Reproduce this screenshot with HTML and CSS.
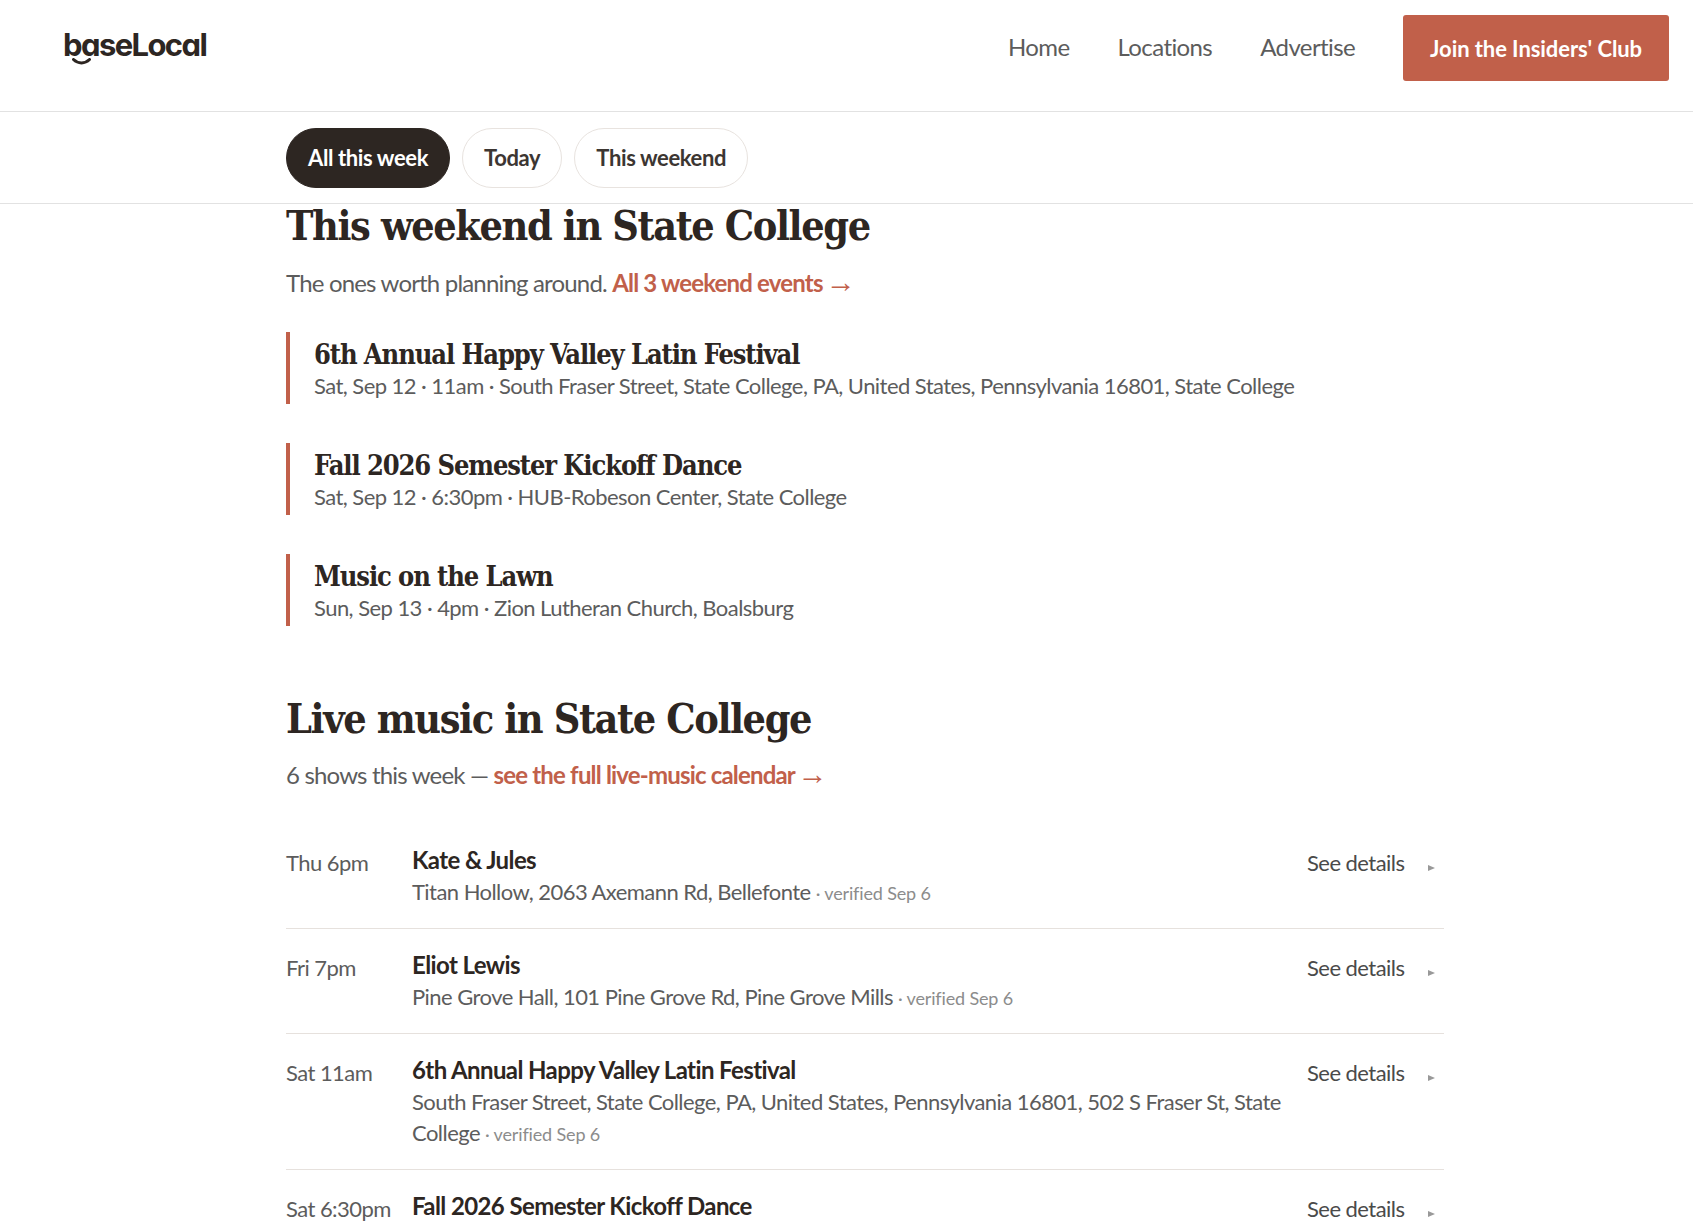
FILE: index.html
```html
<!DOCTYPE html>
<html>
<head>
	<title>baseLocal</title>
	<meta charset="utf-8">
	<link rel="stylesheet" href="styles.css">
</head>
<body>
<header class="site_header">
	<a class="logo" href="#">
		<span class="logo_text">baseLocal</span>
		<svg class="logo_smile" width="19" height="7" viewBox="0 0 19 7"><path d="M1.5 1.5 C6 6 13 6 17.5 1.5" fill="none" stroke="#2d2622" stroke-width="3" stroke-linecap="round"/></svg>
	</a>
	<nav class="site_nav">
		<a class="nav_link" href="#">Home</a>
		<a class="nav_link" href="#">Locations</a>
		<a class="nav_link" href="#">Advertise</a>
		<a class="join_btn" href="#">Join the Insiders' Club</a>
	</nav>
</header>

<div class="filter_bar">
	<a class="pill active" href="#">All this week</a>
	<a class="pill" href="#">Today</a>
	<a class="pill" href="#">This weekend</a>
</div>

<main class="content">
	<h2 class="first">This weekend in State College</h2>
	<p class="lead">The ones worth planning around. <a href="#">All 3 weekend events <span class="arrow">→</span></a></p>

	<div class="pick">
		<h3>6th Annual Happy Valley Latin Festival</h3>
		<p>Sat, Sep 12 · 11am · South Fraser Street, State College, PA, United States, Pennsylvania 16801, State College</p>
	</div>
	<div class="pick">
		<h3>Fall 2026 Semester Kickoff Dance</h3>
		<p>Sat, Sep 12 · 6:30pm · HUB-Robeson Center, State College</p>
	</div>
	<div class="pick">
		<h3>Music on the Lawn</h3>
		<p>Sun, Sep 13 · 4pm · Zion Lutheran Church, Boalsburg</p>
	</div>

	<h2 class="second">Live music in State College</h2>
	<p class="lead">6 shows this week — <a href="#">see the full live-music calendar <span class="arrow">→</span></a></p>

	<ul class="shows">
		<li class="show">
			<div class="when">Thu 6pm</div>
			<div class="what">
				<div class="name">Kate &amp; Jules</div>
				<div class="where">Titan Hollow, 2063 Axemann Rd, Bellefonte <small>· verified Sep 6</small></div>
			</div>
			<a class="details" href="#">See details<i></i></a>
		</li>
		<li class="show">
			<div class="when">Fri 7pm</div>
			<div class="what">
				<div class="name">Eliot Lewis</div>
				<div class="where">Pine Grove Hall, 101 Pine Grove Rd, Pine Grove Mills <small>· verified Sep 6</small></div>
			</div>
			<a class="details" href="#">See details<i></i></a>
		</li>
		<li class="show">
			<div class="when">Sat 11am</div>
			<div class="what">
				<div class="name">6th Annual Happy Valley Latin Festival</div>
				<div class="where">South Fraser Street, State College, PA, United States, Pennsylvania 16801, 502 S Fraser St, State College <small>· verified Sep 6</small></div>
			</div>
			<a class="details" href="#">See details<i></i></a>
		</li>
		<li class="show">
			<div class="when">Sat 6:30pm</div>
			<div class="what">
				<div class="name">Fall 2026 Semester Kickoff Dance</div>
				<div class="where">HUB-Robeson Center, State College <small>· verified Sep 6</small></div>
			</div>
			<a class="details" href="#">See details<i></i></a>
		</li>
	</ul>
</main>
</body>
</html>
```

FILE: styles.css
```css
*{
	margin: 0px;
	padding: 0px;
	box-sizing: border-box;
}
html, body{
	height: 100%;
	overflow: hidden;
}
body{
	font-family: Lato, "Liberation Sans", sans-serif;
	color: #2d2622;
	background-color: #fff;
}
a{
	text-decoration: none;
	color: inherit;
}
ul{
	list-style: none;
}

.site_header{
	display: flex;
	justify-content: space-between;
	height: 112px;
	padding: 15px 24px 0px 63px;
	border-bottom: 1px solid #e2e2e2;
}
.logo{
	position: relative;
	display: block;
	height: 48px;
	margin-top: 6px;
}
.logo_text{
	display: block;
	font-family: Inter, sans-serif;
	font-feature-settings: "cv11";
	font-size: 31px;
	font-weight: 700;
	line-height: 48px;
	letter-spacing: -1.6px;
}
.logo_smile{
	position: absolute;
	left: 9px;
	top: 37px;
}
.site_nav{
	display: flex;
	align-items: center;
	gap: 48px;
	height: 66px;
	font-size: 24px;
	color: #5c5c5c;
}
.nav_link{
	margin-bottom: 3px;
	letter-spacing: -0.6px;
}
.join_btn{
	display: flex;
	align-items: center;
	height: 66px;
	padding: 0px 27px;
	font-size: 22px;
	font-weight: 700;
	letter-spacing: -0.08px;
	color: #fff;
	background-color: #c1604a;
	border-radius: 3px;
}

.filter_bar{
	display: flex;
	gap: 12px;
	height: 92px;
	padding: 16px 0px 0px 286px;
	border-bottom: 1px solid #e2e2e2;
}
.pill{
	display: flex;
	align-items: center;
	height: 60px;
	padding: 0px 21px 2px;
	font-size: 22px;
	font-weight: 700;
	letter-spacing: -0.38px;
	color: #3c3632;
	border: 1px solid #e8e3df;
	border-radius: 30px;
}
.pill.active{
	color: #fff;
	background-color: #2d2622;
	border-color: #2d2622;
}

.content{
	width: 1158px;
	margin-left: 286px;
}
h2{
	font-family: "DejaVu Serif Condensed", "DejaVu Serif", serif;
	font-size: 41px;
	font-weight: 700;
	line-height: 44px;
	letter-spacing: -1.4px;
}
h2.second{
	margin-top: 71px;
}
.lead{
	margin-top: 19px;
	font-size: 24px;
	line-height: 32px;
	letter-spacing: -0.82px;
	color: #5c5c5c;
}
.second + .lead{
	margin-top: 18px;
}
.lead a{
	font-weight: 700;
	color: #c1604a;
}
.arrow{
	margin-left: -2px;
	font-family: "Liberation Sans", sans-serif;
	font-size: 30px;
	font-weight: 400;
	line-height: 20px;
	letter-spacing: 0px;
}

.pick{
	height: 72px;
	margin-top: 39px;
	padding: 6px 0px 0px 24px;
	border-left: 4px solid #c1604a;
}
.lead + .pick{
	margin-top: 33px;
}
.pick h3{
	font-family: "DejaVu Serif Condensed", "DejaVu Serif", serif;
	font-size: 27px;
	font-weight: 700;
	line-height: 33px;
	letter-spacing: -1.1px;
}
.pick p{
	font-size: 22px;
	line-height: 30px;
	letter-spacing: -0.55px;
	color: #5c5c5c;
}

.shows{
	margin-top: 33px;
}
.show{
	display: grid;
	grid-template-columns: 126px 1fr 137px;
	padding: 19px 0px 19.5px;
	border-bottom: 1px solid #e6e1dd;
	font-size: 22px;
	letter-spacing: -0.55px;
}
.when{
	padding-top: 6px;
	color: #5c5c5c;
}
.name{
	font-size: 24px;
	font-weight: 700;
	line-height: 34px;
	letter-spacing: -0.6px;
}
.where{
	line-height: 30.5px;
	color: #5c5c5c;
}
.where small{
	font-size: 18px;
	letter-spacing: -0.15px;
	color: #8c8c8c;
}
.details{
	display: block;
	padding-top: 7px;
	line-height: 26px;
	color: #4a4a4a;
}
.details i{
	display: inline-block;
	width: 0px;
	height: 0px;
	margin-left: 24px;
	border-left: 7px solid #999;
	border-top: 3.5px solid transparent;
	border-bottom: 3.5px solid transparent;
}
```
